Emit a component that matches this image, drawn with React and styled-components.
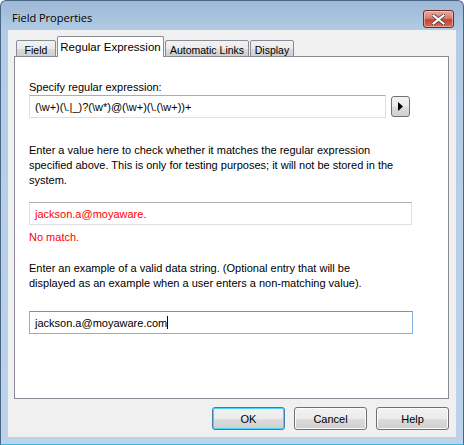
import styled, { createGlobalStyle } from "styled-components";

const GlobalStyle = createGlobalStyle`
    html, body {
        margin: 0;
        padding: 0;
        background: #ffffff;
    }
    * {
        box-sizing: border-box;
    }
`;

const tabs = [
    { label: "Field", width: 40 },
    { label: "Regular Expression", width: 107 },
    { label: "Automatic Links", width: 84 },
    { label: "Display", width: 44 },
];

export default function App() {
    return (
        <>
            <GlobalStyle />
            <Window>
                <TitleBar>
                    <Title>Field Properties</Title>
                    <CloseButton>
                        <svg width="13" height="11" viewBox="0 0 13 11">
                            <path d="M1 1 L12 10 M12 1 L1 10" stroke="#5a3a3a" strokeWidth="3.6" strokeLinecap="square" />
                            <path d="M1.5 1.5 L11.5 9.5 M11.5 1.5 L1.5 9.5" stroke="#ffffff" strokeWidth="2" strokeLinecap="square" />
                        </svg>
                    </CloseButton>
                </TitleBar>
                <Client>
                    <TabStrip>
                        {tabs.map((t, i) => (
                            <Tab key={t.label} $active={i === 1} $width={t.width}>{t.label}</Tab>
                        ))}
                    </TabStrip>
                    <Panel>
                        <Label>Specify regular expression:</Label>
                        <FieldRow>
                            <TextBox $width={357}>(\w+)(\.|_)?(\w*)@(\w+)(\.(\w+))+</TextBox>
                            <ArrowButton>
                                <svg width="5" height="9" viewBox="0 0 5 9">
                                    <path d="M0 0 L5 4.5 L0 9 Z" fill="#000000" />
                                </svg>
                            </ArrowButton>
                        </FieldRow>
                        <Paragraph $top={25}>
                            Enter a value here to check whether it matches the regular expression<br />
                            specified above. This is only for testing purposes; it will not be stored in the<br />
                            system.
                        </Paragraph>
                        <TextBox $width={383} $red $top={14}>jackson.a@moyaware.</TextBox>
                        <Message>No match.</Message>
                        <Paragraph $top={17}>
                            Enter an example of a valid data string. (Optional entry that will be<br />
                            displayed as an example when a user enters a non-matching value).
                        </Paragraph>
                        <TextBox $width={384} $focused $top={20}>
                            jackson.a@moyaware.com<Caret />
                        </TextBox>
                    </Panel>
                    <ButtonRow>
                        <DialogButton $default>OK</DialogButton>
                        <DialogButton>Cancel</DialogButton>
                        <DialogButton>Help</DialogButton>
                    </ButtonRow>
                </Client>
            </Window>
        </>
    );
}

const Window = styled.div`
    width: 464px;
    height: 445px;
    border: 1px solid #4a6686;
    border-bottom-color: #3fb8d8;
    border-radius: 6px 6px 0 0;
    background: linear-gradient(180deg, #9db8d6 0px, #b3cbe4 30px, #bcd3ea 100%);
    padding: 0 7px 7px;
    display: flex;
    flex-direction: column;
    font-family: "Liberation Sans", Arial, sans-serif;
    font-size: 11px;
    color: #000000;
`;

const TitleBar = styled.div`
    height: 29px;
    display: flex;
    align-items: flex-start;
    justify-content: space-between;
`;

const Title = styled.div`
    margin: 10px 0 0 4px;
    font-family: "Open Sans", "Liberation Sans", sans-serif;
    font-size: 11px;
    line-height: 14px;
    color: #000000;
`;

const CloseButton = styled.div`
    margin: 9px 2px 0 0;
    width: 31px;
    height: 18px;
    border: 1px solid #6b2b2b;
    border-radius: 3px;
    background: linear-gradient(180deg, #e7a99c 0%, #d77f6f 45%, #c5432f 55%, #d0705d 100%);
    box-shadow: inset 0 0 0 1px rgba(255, 220, 210, 0.5);
    display: flex;
    align-items: center;
    justify-content: center;
`;

const Client = styled.div`
    flex: 1;
    background: #f0f0f0;
    padding: 7px 7px 0 6px;
    display: flex;
    flex-direction: column;
`;

const TabStrip = styled.div`
    height: 20px;
    display: flex;
    align-items: flex-end;
    padding-left: 2px;
    gap: 1px;
    position: relative;
    z-index: 1;
    margin-bottom: -1px;
`;

const Tab = styled.div`
    width: ${(p) => p.$width}px;
    height: ${(p) => (p.$active ? "21px" : "17px")};
    padding-top: ${(p) => (p.$active ? "3px" : "2px")};
    border: 1px solid #898c95;
    border-bottom: ${(p) => (p.$active ? "none" : "1px solid #898c95")};
    border-radius: 2px 2px 0 0;
    background: ${(p) => (p.$active ? "#ffffff" : "linear-gradient(180deg, #f2f2f2 0%, #ebebeb 50%, #dddddd 51%, #cfcfcf 100%)")};
    font-size: ${(p) => (p.$active ? "11.5px" : "10.5px")};
    line-height: 14px;
    text-align: center;
    white-space: nowrap;
`;

const Panel = styled.div`
    height: 343px;
    background: #ffffff;
    border: 1px solid #898c95;
    padding: 23px 14px 0;
    display: flex;
    flex-direction: column;
    align-items: flex-start;
`;

const Label = styled.div`
    line-height: 14px;
`;

const FieldRow = styled.div`
    margin-top: 1px;
    display: flex;
    align-items: center;
    gap: 5px;
`;

const TextBox = styled.div`
    width: ${(p) => p.$width}px;
    height: 23px;
    margin-top: ${(p) => p.$top || 0}px;
    border: 1px solid ${(p) => (p.$focused ? "#7eb4ea" : "#dbdfe6")};
    border-top-color: ${(p) => (p.$focused ? "#569de5" : "#abadb3")};
    padding: 0 5px;
    display: flex;
    align-items: center;
    color: ${(p) => (p.$red ? "#ff0000" : "#000000")};
    white-space: nowrap;
`;

const Caret = styled.span`
    display: inline-block;
    width: 1px;
    height: 13px;
    background: #000000;
`;

const ArrowButton = styled.div`
    width: 19px;
    height: 21px;
    border: 1px solid #707070;
    border-radius: 3px;
    background: linear-gradient(180deg, #f2f2f2 0%, #ebebeb 50%, #dddddd 51%, #cfcfcf 100%);
    display: flex;
    align-items: center;
    justify-content: center;
`;

const Paragraph = styled.div`
    margin-top: ${(p) => p.$top}px;
    line-height: 15px;
    white-space: nowrap;
`;

const Message = styled.div`
    margin-top: 5px;
    color: #ff0000;
    line-height: 14px;
`;

const ButtonRow = styled.div`
    margin-top: 8px;
    display: flex;
    justify-content: flex-end;
    gap: 9px;
`;

const DialogButton = styled.div`
    width: 73px;
    height: 23px;
    border: 1px solid ${(p) => (p.$default ? "#3c7fb1" : "#707070")};
    border-radius: 3px;
    background: linear-gradient(180deg, #f2f2f2 0%, #ebebeb 50%, #dddddd 51%, #cfcfcf 100%);
    box-shadow: ${(p) => (p.$default ? "inset 0 0 0 1px #48d3fb" : "inset 0 0 0 1px #fcfcfc")};
    display: flex;
    align-items: center;
    justify-content: center;
`;
